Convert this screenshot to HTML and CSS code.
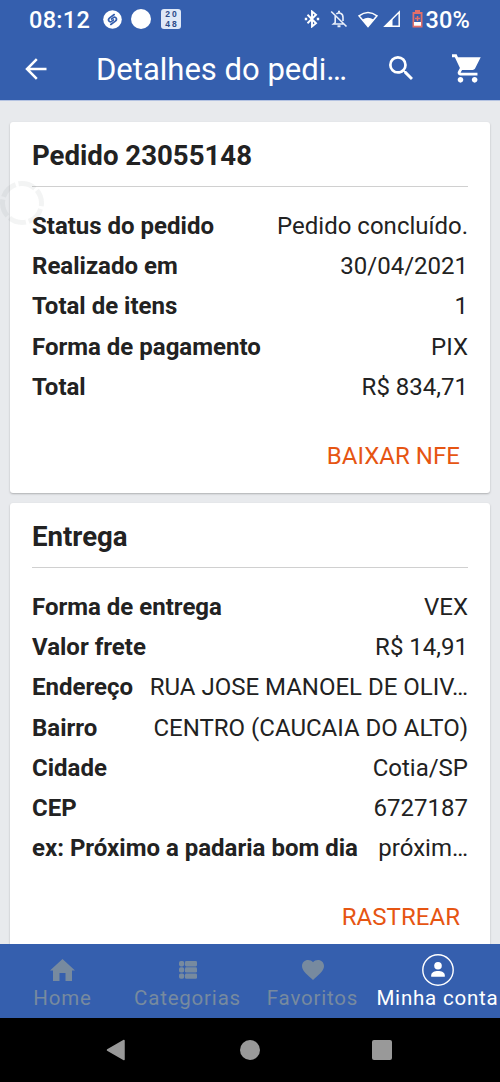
FILE: index.html
```html
<!DOCTYPE html>
<html lang="pt-BR">
<head>
<meta charset="utf-8">
<title>Detalhes do pedido</title>
<link rel="stylesheet" href="styles.css">
</head>
<body>
<div class="screen">
  <header class="top">
    <div class="status">
      <span class="clock">08:12</span>
      <svg class="shazam" width="19" height="19" viewBox="0 0 20 20"><circle cx="10" cy="10" r="9.800" fill="#fff"/><g fill="none" stroke="#355fae" stroke-width="1.800" stroke-linecap="round"><path d="M11.800 4.800L7 8.300C4.500 10.300 6.500 13.500 9 12L11 10.500"/><path d="M8.200 15.200L13 11.700C15.500 9.700 13.500 6.500 11 8L9 9.500"/></g></svg>
      <span class="dot"></span>
      <span class="game"><span>20</span><span>48</span></span>
      <svg class="bt" width="16" height="18" viewBox="0 0 16 18" fill="none" stroke="#fff" stroke-width="1.900"><path d="M3.500 4.800l8.500 8.400L8 16.500v-15l4 3.300-8.500 8.400"/><path d="M.8 9h2.400M12.800 9h2.400" stroke-width="2.300"/></svg>
      <svg class="bell" width="18" height="18" viewBox="0 0 18 18" fill="none" stroke="#e9effa" stroke-width="1.600"><path d="M5.200 6v6.500L3.500 14H14M13 11V7.500c0-4.500-4.500-5.500-6.700-3.500M1.200 1.500l15.300 15"/><path d="M7.500 16.200h3M9 .8v2" stroke-width="2"/></svg>
      <svg class="wifi" width="20" height="17" viewBox="0 0 20 17"><path d="M1 4.800Q10-2 19 4.800L10 15.500z" fill="none" stroke="#fff" stroke-width="1.500"/><path d="M4.500 8.500Q10 5 15.500 8.500L10 15.500z" fill="#fff"/></svg>
      <svg class="signal" width="18" height="18" viewBox="0 0 18 18"><path d="M2 16.200L16.200 2v14.200z" fill="none" stroke="#fff" stroke-width="1.500"/><path d="M1 16.800L9.500 8.500v8.300z" fill="#fff"/></svg>
      <svg class="battery" width="11" height="18" viewBox="0 0 11 18"><path d="M3 0h5v2h2.500v15.500H.5V2H3z" fill="#e36f68"/><path d="M2.300 4h6.400v8H2.300z" fill="#355fae"/><path d="M2 12h7v3.700H2z" fill="#fff"/><path d="M5.500 6v5M3 8.500h5" stroke="#e36f68" stroke-width="1.500"/></svg>
      <span class="percent">30%</span>
    </div>
    <div class="appbar">
      <svg class="back" width="22" height="22" viewBox="0 0 22 22" fill="none" stroke="#fff" stroke-width="2.500"><path d="M21.500 11H2.200M11.800 1.200L2 11l9.800 9.800"/></svg>
      <h1>Detalhes do pedi…</h1>
      <svg class="search" width="24" height="24" viewBox="3 3 17.500 17.500" fill="#fff"><path d="M15.500 14h-.79l-.28-.27A6.471 6.471 0 0 0 16 9.500 6.500 6.500 0 1 0 9.500 16c1.610 0 3.090-.59 4.230-1.570l.27.28v.79l5 4.990L20.490 19l-4.990-5zm-6 0C7.010 14 5 11.990 5 9.500S7.010 5 9.500 5 14 7.010 14 9.500 11.990 14 9.500 14z"/></svg>
      <svg class="cart" width="29" height="29" viewBox="1 2 20.500 20" fill="#fff"><path d="M7 18c-1.100 0-1.990.9-1.990 2S5.900 22 7 22s2-.9 2-2-.9-2-2-2z"/><path d="M17 18c-1.100 0-1.990.9-1.990 2s.89 2 1.990 2 2-.9 2-2-.9-2-2-2z"/><path d="M1 2v2h2l3.600 7.590-1.350 2.450c-.16.28-.25.61-.25.96 0 1.100.9 2 2 2h12v-2H7.420c-.14 0-.25-.11-.25-.25l.03-.12.9-1.630h7.450c.75 0 1.410-.41 1.750-1.030L21.300 4H5.210l-.94-2z"/></svg>
    </div>
  </header>
  <main class="content">
    <section class="card">
      <h2>Pedido 23055148</h2>
      <dl>
        <div><dt>Status do pedido</dt><dd>Pedido concluído.</dd></div>
        <div><dt>Realizado em</dt><dd>30/04/2021</dd></div>
        <div><dt>Total de itens</dt><dd>1</dd></div>
        <div><dt>Forma de pagamento</dt><dd>PIX</dd></div>
        <div><dt>Total</dt><dd>R$ 834,71</dd></div>
      </dl>
      <a class="action">BAIXAR NFE</a>
    </section>
    <section class="card">
      <h2>Entrega</h2>
      <dl>
        <div><dt>Forma de entrega</dt><dd>VEX</dd></div>
        <div><dt>Valor frete</dt><dd>R$ 14,91</dd></div>
        <div><dt>Endereço</dt><dd>RUA JOSE MANOEL DE OLIV…</dd></div>
        <div><dt>Bairro</dt><dd>CENTRO (CAUCAIA DO ALTO)</dd></div>
        <div><dt>Cidade</dt><dd>Cotia/SP</dd></div>
        <div><dt>CEP</dt><dd>6727187</dd></div>
        <div><dt>ex: Próximo a padaria bom dia</dt><dd>próxim…</dd></div>
      </dl>
      <a class="action">RASTREAR</a>
    </section>
  </main>
  <nav class="tabs">
    <a class="tab"><span class="icon"><svg width="25" height="22" viewBox="0 0 25 22" fill="currentColor"><path d="M12.500 0L25 11.500h-3V22h-6.500v-8h-6v8H3V11.500H0z"/></svg></span>Home</a>
    <a class="tab"><span class="icon"><svg width="18" height="18" viewBox="0 0 18 18" fill="currentColor"><rect width="5.200" height="5.400" rx="1.800"/><rect y="6.200" width="5.200" height="5.400" rx="1.800"/><rect y="12.400" width="5.200" height="5.400" rx="1.800"/><rect x="6" width="12" height="5.400" rx="1.300"/><rect x="6" y="6.200" width="12" height="5.400" rx="1.300"/><rect x="6" y="12.400" width="12" height="5.400" rx="1.300"/></svg></span>Categorias</a>
    <a class="tab"><span class="icon"><svg width="22" height="20" viewBox="2 3 20 18.350" preserveAspectRatio="none" fill="currentColor"><path d="M12 21.350l-1.450-1.320C5.400 15.360 2 12.280 2 8.500 2 5.420 4.420 3 7.500 3c1.740 0 3.410.81 4.500 2.090C13.090 3.810 14.760 3 16.500 3 19.580 3 22 5.420 22 8.500c0 3.780-3.400 6.860-8.550 11.540L12 21.350z"/></svg></span>Favoritos</a>
    <a class="tab active"><span class="icon"><svg width="32" height="32" viewBox="0 0 32 32"><circle cx="16" cy="16" r="15.200" fill="none" stroke="#fff" stroke-width="1.400"/><circle cx="16" cy="11.800" r="3.800" fill="#fff"/><path d="M9.200 22.700v-1.500c0-5.600 13.600-5.600 13.600 0v1.500z" fill="#fff"/></svg></span>Minha conta</a>
  </nav>
  <footer class="system">
    <svg width="20" height="22" viewBox="0 0 20 22"><path d="M18 1.500v19L1.500 11z" fill="#999" stroke="#999" stroke-width="1.500" stroke-linejoin="round"/></svg>
    <span class="home-key"></span>
    <span class="recent-key"></span>
  </footer>
  <svg class="spinner" width="46" height="46" viewBox="0 0 46 46"><circle cx="23" cy="23" r="19.500"/></svg>
</div>
</body>
</html>
```

FILE: styles.css
```css
* { box-sizing: border-box; }
body { margin: 0; font-family: Roboto, sans-serif; color: #222; background: #000; }
h1, h2, dl, dt, dd { margin: 0; }
svg { display: block; flex: none; }
.screen { position: relative; width: 500px; height: 1082px; display: flex; flex-direction: column; overflow: hidden; }
.top { height: 101px; flex: none; background: #355fae; border-bottom: 1px solid #b4c3e2; color: #fff; }
.status { height: 38px; display: flex; align-items: center; padding-left: 29px; font-size: 23.500px; font-weight: 500; white-space: nowrap; }
.clock { width: 74px; letter-spacing: .3px; }
.percent { letter-spacing: .2px; }
.clock, .percent { padding-top: 1px; }
.dot { width: 20px; height: 20px; border-radius: 50%; background: #fff; margin-left: 9px; }
.game { width: 20px; height: 20px; margin: 0 0 0 10px; background: #dfe8f7; border-radius: 3px; color: #2b4a88; display: flex; flex-direction: column; font: 700 8.500px/10px "Liberation Sans", sans-serif; letter-spacing: 2px; text-align: center; padding-left: 2px; }
.bt { margin-left: 123px; }
.bell { margin-left: 10px; }
.wifi { margin-left: 10px; }
.signal { margin-left: 5px; }
.battery { margin: 0 2.500px 0 11px; }
.appbar { height: 62px; display: flex; align-items: center; padding: 0 18px 0 25px; }
.back { margin-top: -1px; }
h1 { font-size: 31px; font-weight: 400; line-height: 36px; width: 294px; margin: 2px 0 0 49px; white-space: nowrap; }
.search { margin: -2px 0 0 -1px; }
.cart { margin: -2px 0 0 39px; }
.content { flex: 1; min-height: 0; overflow: hidden; background: #e8eaed; padding: 21px 10.500px 0 10px; display: flex; flex-direction: column; gap: 10.500px; }
.card { flex: none; height: 370.500px; padding: 0 21.500px 0 22px; background: #fff; border-radius: 3px; box-shadow: 0 1px 2px rgba(0,0,0,.25); display: flex; flex-direction: column; }
.card + .card { height: 460px; }
h2 { height: 65px; flex: none; border-bottom: 1.300px solid #d0d0d0; font-size: 27.600px; font-weight: 700; line-height: 67.500px; }
dl { padding-top: 19px; font-size: 24px; line-height: 40.200px; }
dl div { height: 40.200px; display: flex; justify-content: space-between; white-space: nowrap; }
dt { font-weight: 700; }
.action { align-self: flex-end; margin: 29px 8px 0 0; font-size: 24px; line-height: 40px; color: #e65512; letter-spacing: .05px; }
.tabs { height: 74.500px; flex: none; background: #355fae; color: #778a9f; display: grid; grid-template-columns: repeat(4, 125px); font-size: 20.500px; line-height: 24px; letter-spacing: .8px; }
.tab { display: flex; flex-direction: column; align-items: center; white-space: nowrap; }
.active { color: #fff; }
.icon { height: 42px; padding-top: 10px; display: flex; align-items: center; }
.system { height: 64px; flex: none; background: #000; display: flex; align-items: center; padding-left: 106px; }
.home-key { width: 20px; height: 20px; border-radius: 50%; background: #999; margin-left: 114px; }
.recent-key { width: 20px; height: 20px; border-radius: 2px; background: #999; margin-left: 112px; }
.spinner { position: absolute; left: -1px; top: 180px; fill: none; stroke: rgba(100,110,120,.08); stroke-width: 5; stroke-dasharray: 17.600 2.820; stroke-dashoffset: -6; }
```
